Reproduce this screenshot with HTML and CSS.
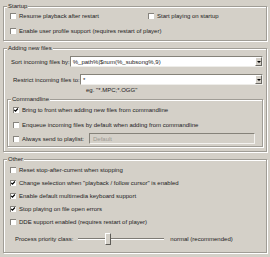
FILE: index.html
```html
<!DOCTYPE html>
<html>
<head>
<meta charset="utf-8">
<link rel="stylesheet" href="styles.css">
</head>
<body>
<div class="page">
  <fieldset class="group">
    <legend>Startup</legend>
    <div class="body startup-body">
      <div class="two">
        <label class="chk"><span class="box"></span>Resume playback after restart</label>
        <label class="chk"><span class="box"></span>Start playing on startup</label>
      </div>
      <label class="chk"><span class="box"></span>Enable user profile support (requires restart of player)</label>
    </div>
  </fieldset>

  <fieldset class="group">
    <legend>Adding new files</legend>
    <div class="body adding-body">
      <div class="field sort-row">
        <span class="lbl">Sort incoming files by:</span>
        <div class="combo sort-combo"><span class="val">%_path%|$num(%_subsong%,9)</span><span class="drop"><span class="tri"></span></span></div>
      </div>
      <div class="field restrict-row">
        <span class="lbl">Restrict incoming files to:</span>
        <div class="combo restrict-combo"><span class="val">*</span><span class="drop"><span class="tri"></span></span></div>
      </div>
      <div class="hint">eg. "*.MPC;*.OGG"</div>
      <fieldset class="group inner">
        <legend>Commandline</legend>
        <div class="body cmd-body">
          <label class="chk"><span class="box"><svg viewBox="0 0 6 6" width="6" height="6"><path d="M1.2 2.8 L2.5 4.2 L4.9 1.5" fill="none" stroke="#000" stroke-width="1.2"/></svg></span>Bring to front when adding new files from commandline</label>
          <label class="chk"><span class="box"></span>Enqueue incoming files by default when adding from commandline</label>
          <div class="field always-row">
            <label class="chk"><span class="box"></span>Always send to playlist:</label>
            <div class="textbox"><span>Default</span></div>
          </div>
        </div>
      </fieldset>
    </div>
  </fieldset>

  <fieldset class="group">
    <legend>Other</legend>
    <div class="body other-body">
      <label class="chk"><span class="box"></span>Reset stop-after-current when stopping</label>
      <label class="chk"><span class="box"><svg viewBox="0 0 6 6" width="6" height="6"><path d="M1.2 2.8 L2.5 4.2 L4.9 1.5" fill="none" stroke="#000" stroke-width="1.2"/></svg></span>Change selection when "playback / follow cursor" is enabled</label>
      <label class="chk"><span class="box"><svg viewBox="0 0 6 6" width="6" height="6"><path d="M1.2 2.8 L2.5 4.2 L4.9 1.5" fill="none" stroke="#000" stroke-width="1.2"/></svg></span>Enable default multimedia keyboard support</label>
      <label class="chk"><span class="box"><svg viewBox="0 0 6 6" width="6" height="6"><path d="M1.2 2.8 L2.5 4.2 L4.9 1.5" fill="none" stroke="#000" stroke-width="1.2"/></svg></span>Stop playing on file open errors</label>
      <label class="chk"><span class="box"></span>DDE support enabled (requires restart of player)</label>
      <div class="field slider-row">
        <span class="lbl">Process priority class:</span>
        <div class="slider">
          <span class="track left"></span>
          <span class="thumb"></span>
          <span class="track right"></span>
        </div>
        <span class="lbl">normal (recommended)</span>
      </div>
    </div>
  </fieldset>
</div>
</body>
</html>
```

FILE: styles.css
```css
* { box-sizing: border-box; }
html, body { margin: 0; padding: 0; }
body {
  width: 270px;
  height: 257px;
  overflow: hidden;
  background: #d4d0c8;
  font-family: "Liberation Sans", Arial, sans-serif;
  font-size: 6px;
  line-height: 8px;
  color: #222;
}
.page {
  padding: 2px 3px 0 3px;
  display: flex;
  flex-direction: column;
  gap: 3px;
}
.group {
  margin: 0;
  padding: 0;
  min-width: 0;
  border: 1px solid #a09d96;
  box-shadow: inset 1px 1px 0 #fff, 1px 1px 0 #fff;
}
.group legend {
  margin-left: 3px;
  padding: 0 1px;
  height: 8px;
  line-height: 8px;
  background: #d4d0c8;
}
.body {
  display: flex;
  flex-direction: column;
}
.chk {
  display: flex;
  align-items: center;
  gap: 3px;
  height: 8px;
  white-space: nowrap;
}
.box {
  flex: none;
  width: 6px;
  height: 6px;
  background: #fff;
  box-shadow: inset 1px 1px 0 #86837d;
  display: flex;
}
.box svg { display: block; }

.startup-body { padding: 2px 3px 5px 6px; gap: 7px; }
.two { display: grid; grid-template-columns: 138px auto; }

.adding-body { padding: 4px 3px 4px 3px; }
.field { display: flex; align-items: center; white-space: nowrap; }
.sort-row { height: 11px; padding-left: 4px; }
.restrict-row { height: 11px; margin-top: 7px; padding-left: 6px; }
.sort-combo { width: 195px; }
.restrict-combo { width: 183px; }
.combo {
  margin-left: auto;
  height: 11px;
  background: #fff;
  border: 1px solid;
  border-color: #858279 #eeede9 #eeede9 #858279;
  display: flex;
  align-items: center;
}
.combo .val { flex: 1; padding-left: 2px; overflow: hidden; }
.drop {
  flex: none;
  width: 7px;
  height: 9px;
  background: #d4d0c8;
  border: 1px solid;
  border-color: #fff #6b6963 #6b6963 #fff;
  display: flex;
  align-items: center;
  justify-content: center;
}
.tri {
  width: 0;
  height: 0;
  border-left: 2px solid transparent;
  border-right: 2px solid transparent;
  border-top: 2px solid #000;
}
.hint { height: 8px; margin-top: 1px; padding-left: 79px; }

.inner { margin-top: 1px; }
.cmd-body { padding: 3px 7px 2px 5px; }
.cmd-body .chk + .chk { margin-top: 7px; }
.always-row { height: 11px; margin-top: 4px; }
.textbox {
  margin-left: auto;
  width: 166px;
  height: 11px;
  background: #d4d0c8;
  border: 1px solid;
  border-color: #858279 #f4f3f0 #f4f3f0 #858279;
  color: #9c9992;
  padding-left: 3px;
  display: flex;
  align-items: center;
}

.other-body { padding: 3px 3px 5px 6px; gap: 5px; }
.slider-row { height: 16px; padding-left: 5px; }
.slider {
  width: 86px;
  margin: 0 6px 0 5px;
  height: 12px;
  display: flex;
  align-items: center;
}
.track {
  height: 2px;
  border-top: 1px solid #7e7b75;
  border-bottom: 1px solid #fff;
}
.track.left { width: 27px; }
.track.right { flex: 1; }
.thumb {
  flex: none;
  width: 6px;
  height: 12px;
  background: #d4d0c8;
  border: 1px solid;
  border-color: #fff #5e5c57 #5e5c57 #fff;
}
```
